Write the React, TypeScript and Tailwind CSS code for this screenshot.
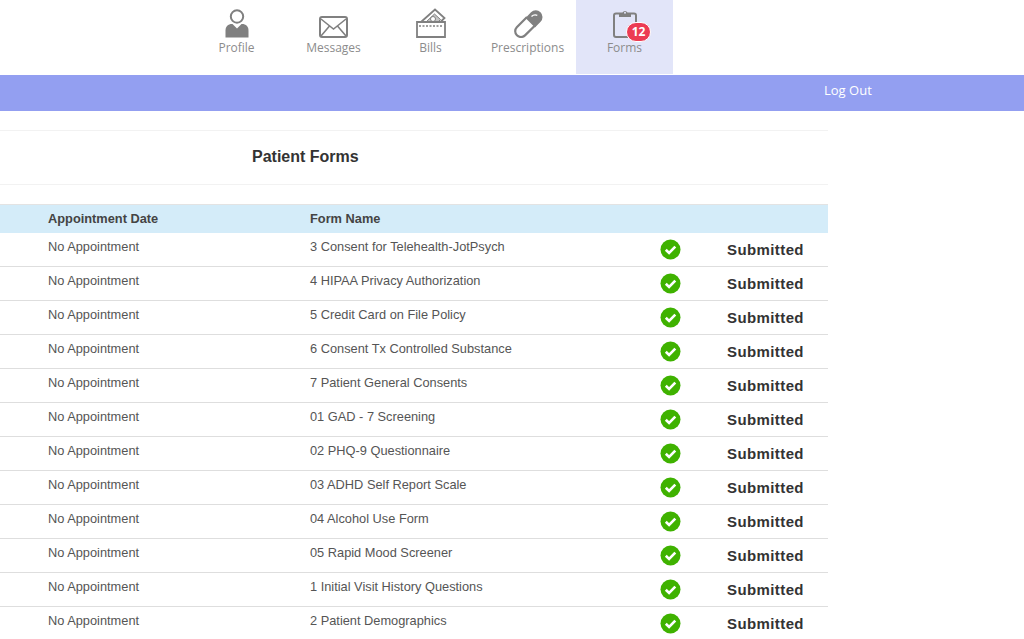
import type { ReactNode } from "react";

const forms = [
  "3 Consent for Telehealth-JotPsych",
  "4 HIPAA Privacy Authorization",
  "5 Credit Card on File Policy",
  "6 Consent Tx Controlled Substance",
  "7 Patient General Consents",
  "01 GAD - 7 Screening",
  "02 PHQ-9 Questionnaire",
  "03 ADHD Self Report Scale",
  "04 Alcohol Use Form",
  "05 Rapid Mood Screener",
  "1 Initial Visit History Questions",
  "2 Patient Demographics",
];

function ProfileIcon() {
  return (
    <svg width="24" height="29" viewBox="0 0 24 29" fill="none">
      <circle cx="12" cy="7.500" r="6.200" stroke="#808080" strokeWidth="2" />
      <path d="M0.500 28.500v-7c0-4 2.500-6.500 6.500-6.500h10c4 0 6.500 2.500 6.500 6.500v7z" fill="#808080" />
      <path d="M7.500 15h9L12 19.500z" fill="#fff" />
    </svg>
  );
}

function MessagesIcon() {
  return (
    <svg width="29" height="22" viewBox="0 0 29 22" fill="none" stroke="#808080" strokeWidth="2">
      <rect x="1" y="1" width="27" height="20" rx="2" />
      <path d="M2 3 14.500 13 27 3M2 20l8.500-10M27 20l-8.500-10" strokeWidth="1.600" />
    </svg>
  );
}

function BillsIcon() {
  return (
    <svg width="30" height="30" viewBox="0 0 30 30" fill="none" stroke="#808080" strokeWidth="1.500">
      <path d="M5 14 19 1.500 28.500 10 24.500 14" strokeWidth="1.800" />
      <path d="M10 14l8.500-8 6 5.500-2.500 2.500" fill="#c4c4c4" stroke="#808080" strokeWidth="1" />
      <circle cx="17" cy="11" r="2.500" fill="#fff" strokeWidth="1" />
      <path d="M1 14h28v15H1z" strokeWidth="1.800" fill="#fff" />
      <path d="M3 18h24" strokeWidth="1.600" strokeDasharray="2 1.500" />
    </svg>
  );
}

function PillIcon() {
  return (
    <svg width="30" height="29" viewBox="0 0 30 29" fill="none">
      <path d="M14 8 3.800 18.200a5.800 5.800 0 0 0 8.200 8.200L22 16.500" stroke="#808080" strokeWidth="2.200" />
      <path d="M12.500 9 18 3.300a6.700 6.700 0 0 1 9.600 9.400L22 18.500z" fill="#808080" />
      <path d="M18.500 7.500c1.500-1.500 3.800-2 5.800-1.200" stroke="#fff" strokeWidth="1.300" />
    </svg>
  );
}

function FormsIcon() {
  return (
    <svg width="24" height="29" viewBox="0 0 24 29" fill="none">
      <path d="M6 4.500H3a2 2 0 0 0-2 2V26a2 2 0 0 0 2 2h18a2 2 0 0 0 2-2V6.500a2 2 0 0 0-2-2h-3" stroke="#808080" strokeWidth="2" />
      <path d="M6 8V3.500h3.500a2.800 2.800 0 0 1 5 0H18V8z" fill="#808080" />
      <circle cx="12" cy="3.700" r="1" fill="#e2e5f9" />
    </svg>
  );
}

function NavItem({ label, icon, active, badge }: { label: string; icon: ReactNode; active?: boolean; badge?: string }) {
  return (
    <a className={`relative flex h-[74px] w-[97px] flex-col items-center ${active ? "bg-[#e2e5f9]" : ""}`}>
      <div className="flex h-[38px] items-end">{icon}</div>
      <span className="mt-[3px] text-[12px] leading-[14px] text-[#8c8c8c] font-['Open_Sans',sans-serif]">{label}</span>
      {badge && (
        <span className="absolute left-[50px] top-[22px] flex h-[20px] w-[25px] items-center justify-center rounded-full border border-white bg-[#ec3b53] text-[12px] font-bold text-white font-['Open_Sans',sans-serif]">
          {badge}
        </span>
      )}
    </a>
  );
}

function Check() {
  return (
    <svg width="21" height="21" viewBox="0 0 21 21">
      <circle cx="10.500" cy="10.500" r="10" fill="#3fb200" />
      <path d="M5.800 10.800l3.300 3.200 6.200-6.400" fill="none" stroke="#fff" strokeWidth="2.600" />
    </svg>
  );
}

export default function App() {
  return (
    <div className="h-[639px] w-[1024px] overflow-hidden bg-white font-['Liberation_Sans',sans-serif]">
      <nav className="flex h-[75px] pl-[188px]">
        <NavItem label="Profile" icon={<ProfileIcon />} />
        <NavItem label="Messages" icon={<MessagesIcon />} />
        <NavItem label="Bills" icon={<BillsIcon />} />
        <NavItem label="Prescriptions" icon={<PillIcon />} />
        <NavItem label="Forms" icon={<FormsIcon />} active badge="12" />
      </nav>
      <div className="flex h-[36px] items-center bg-[#939ff1] pb-[4px] pl-[824px]">
        <span className="text-[13px] text-white font-['Open_Sans',sans-serif]">Log Out</span>
      </div>
      <main className="w-[828px] pt-[19px]">
        <div className="flex h-[55px] items-center border-y border-[#f2f2f2] pb-[2px] pl-[252px]">
          <h1 className="text-[16px] font-bold text-[#333]">Patient Forms</h1>
        </div>
        <div className="mt-[19px] flex h-[29px] items-center border-t border-[#e3e3e3] bg-[#d4ecf9] pb-[1px] text-[12.800px] font-bold text-[#444]">
          <div className="w-[310px] pl-[48px]">Appointment Date</div>
          <div>Form Name</div>
        </div>
        {forms.map((f) => (
          <div key={f} className="flex h-[34px] items-center border-b border-[#dedede] text-[12.800px] text-[#555]">
            <div className="w-[310px] pb-[5px] pl-[48px]">No Appointment</div>
            <div className="w-[350px] pb-[5px]">{f}</div>
            <div className="w-[67px]"><Check /></div>
            <div className="pt-[1px] text-[15px] font-bold tracking-[0.4px] text-[#333]">Submitted</div>
          </div>
        ))}
      </main>
    </div>
  );
}
